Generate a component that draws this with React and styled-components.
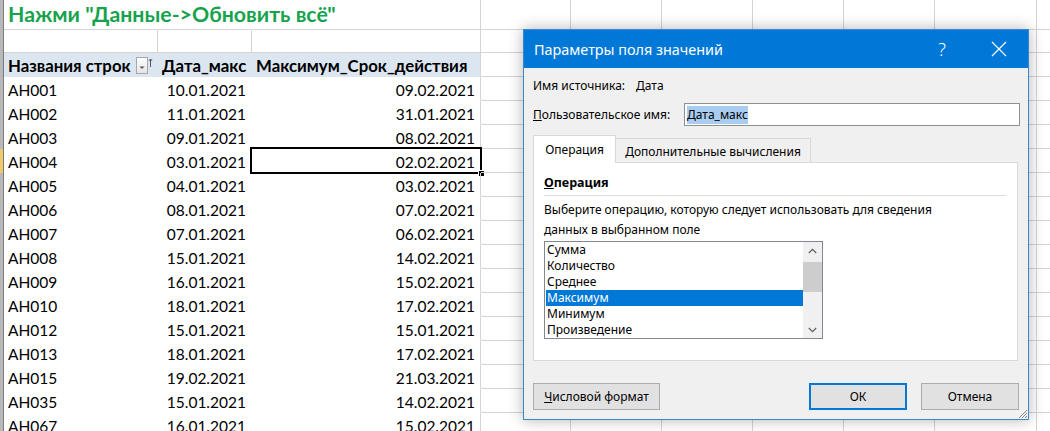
import React from "react";
import styled, { createGlobalStyle } from "styled-components";

const GRID = "#d4d4d4";
const COLS = [154, 94, 229, 90, 91, 91, 91, 91, 102, 100];

const DATA = [
  ["AH001", "10.01.2021", "09.02.2021"],
  ["AH002", "11.01.2021", "31.01.2021"],
  ["AH003", "09.01.2021", "08.02.2021"],
  ["AH004", "03.01.2021", "02.02.2021"],
  ["AH005", "04.01.2021", "03.02.2021"],
  ["AH006", "08.01.2021", "07.02.2021"],
  ["AH007", "07.01.2021", "06.02.2021"],
  ["AH008", "15.01.2021", "14.02.2021"],
  ["AH009", "16.01.2021", "15.02.2021"],
  ["AH010", "18.01.2021", "17.02.2021"],
  ["AH012", "15.01.2021", "15.01.2021"],
  ["AH013", "18.01.2021", "17.02.2021"],
  ["AH015", "19.02.2021", "21.03.2021"],
  ["AH035", "15.01.2021", "14.02.2021"],
  ["AH067", "16.01.2021", "15.02.2021"],
];

const OPS = ["Сумма", "Количество", "Среднее", "Максимум", "Минимум", "Произведение"];

const GlobalStyle = createGlobalStyle`
  html, body { margin: 0; padding: 0; background: #fff; }
  body { overflow: hidden; }
  * { box-sizing: border-box; }
`;

const Sheet = styled.div`
  position: relative;
  width: 1050px;
  height: 431px;
  overflow: hidden;
  background: #fff;
  font-family: Lato, "Liberation Sans", sans-serif;
  font-size: 15.5px;
  color: #000;
`;

const Row = styled.div`
  display: flex;
  height: ${(p) => p.$h}px;
`;

const RowHead = styled.div`
  flex: none;
  width: 4px;
  background: ${(p) => (p.$active ? "#f0c96c" : "#b9b9b9")};
  border-right: 1px solid #7a7a7a;
`;

const Cell = styled.div`
  position: relative;
  flex: none;
  width: ${(p) => p.$w}px;
  display: flex;
  align-items: center;
  justify-content: ${(p) => (p.$align === "right" ? "flex-end" : "flex-start")};
  padding: ${(p) => (p.$bold ? "1px 5px 0 4px" : "3px 5px 0 4px")};
  white-space: nowrap;
  font-weight: ${(p) => (p.$bold ? 700 : 400)};
  font-size: ${(p) => (p.$bold ? "16.8px" : "inherit")};
  background: ${(p) => p.$bg || "transparent"};
  border-right: 1px solid ${(p) => (p.$vline ? GRID : "transparent")};
  border-bottom: 1px solid ${(p) => (p.$hline ? GRID : "transparent")};
`;

const Title = styled.span`
  font-size: 21.3px;
  font-weight: 700;
  color: #17a34e;
  margin-top: -5px;
`;

const FilterIcon = styled.svg`
  margin-left: auto;
  margin-right: -1px;
  flex: none;
`;

const Selection = styled.div`
  position: absolute;
  left: -2px;
  top: -2px;
  width: 232px;
  height: 27px;
  border: 2px solid #000;
  pointer-events: none;
`;

const FillHandle = styled.div`
  position: absolute;
  right: -5px;
  bottom: -5px;
  width: 7px;
  height: 7px;
  background: #000;
  border: 1px solid #fff;
`;

/* ---------------- Dialog ---------------- */

const Dialog = styled.div`
  position: absolute;
  left: 523px;
  top: 29px;
  width: 506px;
  height: 391px;
  border: 1px solid #3d86cf;
  background: #f0f0f0;
  box-shadow: 0 0 14px rgba(0, 0, 0, 0.3);
  display: flex;
  flex-direction: column;
  font-family: "Noto Sans", "Open Sans", sans-serif;
  font-size: 12px;
  color: #000;
`;

const TitleBar = styled.div`
  flex: none;
  height: 38px;
  background: #0078d7;
  color: #fff;
  display: flex;
  align-items: center;
  padding-left: 10px;
`;

const TitleText = styled.div`
  flex: 1;
  font-size: 14.4px;
  font-weight: 400;
`;

const TitleBtn = styled.div`
  width: ${(p) => p.$w}px;
  height: 100%;
  display: flex;
  align-items: center;
  justify-content: center;
  font-size: 18px;
  font-weight: 300;
`;

const Body = styled.div`
  flex: 1;
  display: flex;
  flex-direction: column;
  padding: 7px 8px 0 9px;
  position: relative;
`;

const FieldRow = styled.div`
  display: flex;
  align-items: center;
  height: ${(p) => p.$h}px;
  margin-bottom: ${(p) => p.$mb || 0}px;
`;

const Label = styled.div`
  width: ${(p) => p.$w}px;
  flex: none;
`;

const Input = styled.div`
  flex: 1;
  height: 100%;
  background: #fff;
  border: 1px solid #8f8f8f;
  display: flex;
  align-items: center;
  padding-left: 2px;
`;

const Selected = styled.span`
  background: #a8cdf0;
  padding: 1px 0;
  line-height: 16px;
`;

const TabStrip = styled.div`
  display: flex;
  align-items: flex-end;
  height: 28px;
  margin-bottom: -1px;
  position: relative;
  z-index: 1;
`;

const Tab = styled.div`
  width: ${(p) => p.$w}px;
  height: ${(p) => (p.$active ? 28 : 25)}px;
  display: flex;
  align-items: center;
  justify-content: center;
  padding-top: ${(p) => (p.$active ? 0 : 1)}px;
  background: ${(p) => (p.$active ? "#fff" : "#f0f0f0")};
  border: 1px solid #d9d9d9;
  border-bottom: ${(p) => (p.$active ? "none" : "1px solid #d9d9d9")};
  border-left: ${(p) => (p.$active ? "1px solid #d9d9d9" : "none")};
`;

const Panel = styled.div`
  height: 199px;
  margin-right: 2px;
  background: #fff;
  border: 1px solid #d9d9d9;
  padding: 11px 11px 0 10px;
  display: flex;
  flex-direction: column;
`;

const SectionHead = styled.div`
  font-weight: 700;
  font-size: 12.5px;
  line-height: 18px;
  padding-bottom: 3px;
  border-bottom: 1px solid #dcdcdc;
`;

const Desc = styled.div`
  margin-top: 4px;
  line-height: 20px;
`;

const ListBox = styled.div`
  width: 279px;
  height: 98px;
  margin-top: 1px;
  border: 1px solid #828790;
  background: #fff;
  display: flex;
`;

const Items = styled.div`
  flex: 1;
  display: flex;
  flex-direction: column;
  padding-left: 1px;
`;

const Item = styled.div`
  height: 16px;
  line-height: 16px;
  padding-left: 1px;
  background: ${(p) => (p.$sel ? "#0078d7" : "transparent")};
  color: ${(p) => (p.$sel ? "#fff" : "#000")};
`;

const ScrollBar = styled.div`
  width: 19px;
  flex: none;
  background: #f0f0f0;
  display: flex;
  flex-direction: column;
`;

const ScrollBtn = styled.div`
  height: 17px;
  display: flex;
  align-items: center;
  justify-content: center;
`;

const Track = styled.div`
  flex: 1;
`;

const Thumb = styled.div`
  margin-top: 3px;
  height: 30px;
  background: #cdcdcd;
`;

const ButtonRow = styled.div`
  display: flex;
  align-items: center;
  margin-top: 22px;
  height: 27px;
`;

const Button = styled.div`
  width: ${(p) => p.$w}px;
  height: 27px;
  margin-left: ${(p) => p.$ml || 0}px;
  background: #e1e1e1;
  border: ${(p) => (p.$default ? "2px solid #0078d7" : "1px solid #adadad")};
  display: flex;
  align-items: center;
  justify-content: center;
`;

const Spacer = styled.div`
  flex: 1;
`;

const Grip = styled.svg`
  position: absolute;
  right: 0;
  bottom: 0;
`;

function GridCells({ from = 3, row }) {
  return COLS.slice(from).map((w, i) => (
    <Cell key={`${row}-${i}`} $w={w} $vline $hline />
  ));
}

function Filter() {
  return (
    <FilterIcon width="17" height="17" viewBox="0 0 17 17">
      <defs>
        <linearGradient id="fg" x1="0" y1="0" x2="0" y2="1">
          <stop offset="0" stopColor="#ffffff" />
          <stop offset="1" stopColor="#e4e4e4" />
        </linearGradient>
      </defs>
      <rect x="0.5" y="0.5" width="11" height="16" fill="url(#fg)" stroke="#a8a8a8" />
      <path d="M3.5 9.5 L8.5 9.5 L6 12 Z" fill="#555" />
      <path d="M14.5 2 L14.5 10 M13 3.8 L14.5 2 L16 3.8" stroke="#444" strokeWidth="0.9" fill="none" />
    </FilterIcon>
  );
}

export default function App() {
  return (
    <>
      <GlobalStyle />
      <Sheet>
        <Row $h={30}>
          <RowHead />
          <Cell $w={COLS[0]} $hline>
            <Title>Нажми "Данные-&gt;Обновить всё"</Title>
          </Cell>
          <Cell $w={COLS[1]} $hline />
          <Cell $w={COLS[2]} $hline $vline />
          <GridCells row="r1" />
        </Row>
        <Row $h={23}>
          <RowHead />
          <Cell $w={COLS[0]} $hline $vline />
          <Cell $w={COLS[1]} $hline $vline />
          <Cell $w={COLS[2]} $hline $vline />
          <GridCells row="r2" />
        </Row>
        <Row $h={24}>
          <RowHead />
          <Cell $w={COLS[0]} $bold $bg="#dce6f1">
            Названия строк
            <Filter />
          </Cell>
          <Cell $w={COLS[1]} $bold $bg="#dce6f1">Дата_макс</Cell>
          <Cell $w={COLS[2]} $bold $bg="#dce6f1" $vline>Максимум_Срок_действия</Cell>
          <GridCells row="hd" />
        </Row>
        {DATA.map(([name, d1, d2], i) => (
          <Row $h={24} key={name}>
            <RowHead $active={i === 3} />
            <Cell $w={COLS[0]}>{name}</Cell>
            <Cell $w={COLS[1]} $align="right">{d1}</Cell>
            <Cell $w={COLS[2]} $align="right" $vline>
              {d2}
              {i === 3 && (
                <Selection>
                  <FillHandle />
                </Selection>
              )}
            </Cell>
            <GridCells row={name} />
          </Row>
        ))}

        <Dialog>
          <TitleBar>
            <TitleText>Параметры поля значений</TitleText>
            <TitleBtn $w={54}>?</TitleBtn>
            <TitleBtn $w={59}>
              <svg width="16" height="16" viewBox="0 0 16 16">
                <path d="M1 1 L15 15 M15 1 L1 15" stroke="#fff" strokeWidth="1.2" />
              </svg>
            </TitleBtn>
          </TitleBar>
          <Body>
            <FieldRow $h={20} $mb={8}>
              <Label $w={103}>Имя источника:</Label>
              <span>Дата</span>
            </FieldRow>
            <FieldRow $h={23} $mb={9}>
              <Label $w={151}>
                <u>П</u>ользовательское имя:
              </Label>
              <Input>
                <Selected>Дата_макс</Selected>
              </Input>
            </FieldRow>
            <TabStrip>
              <Tab $active $w={83}>Операция</Tab>
              <Tab $w={195}>Дополнительные вычисления</Tab>
            </TabStrip>
            <Panel>
              <SectionHead>
                <u>О</u>перация
              </SectionHead>
              <Desc>
                Выберите операцию, которую следует использовать для сведения
                <br />
                данных в выбранном поле
              </Desc>
              <ListBox>
                <Items>
                  {OPS.map((op) => (
                    <Item key={op} $sel={op === "Максимум"}>
                      {op}
                    </Item>
                  ))}
                </Items>
                <ScrollBar>
                  <ScrollBtn>
                    <svg width="9" height="6" viewBox="0 0 9 6">
                      <path d="M0.8 5 L4.5 1.3 L8.2 5" stroke="#606060" strokeWidth="1.2" fill="none" />
                    </svg>
                  </ScrollBtn>
                  <Track>
                    <Thumb />
                  </Track>
                  <ScrollBtn>
                    <svg width="9" height="6" viewBox="0 0 9 6">
                      <path d="M0.8 1 L4.5 4.7 L8.2 1" stroke="#606060" strokeWidth="1.2" fill="none" />
                    </svg>
                  </ScrollBtn>
                </ScrollBar>
              </ListBox>
            </Panel>
            <ButtonRow>
              <Button $w={127}>
                <span>
                  <u>Ч</u>исловой формат
                </span>
              </Button>
              <Spacer />
              <Button $w={98} $default>ОК</Button>
              <Button $w={98} $ml={14}>Отмена</Button>
              <div style={{ width: 1 }} />
            </ButtonRow>
            <Grip width="11" height="11" viewBox="0 0 11 11">
              <path d="M10 2 L2 10 M10 5 L5 10 M10 8 L8 10" stroke="#8a8a8a" strokeWidth="1" />
            </Grip>
          </Body>
        </Dialog>
      </Sheet>
    </>
  );
}
